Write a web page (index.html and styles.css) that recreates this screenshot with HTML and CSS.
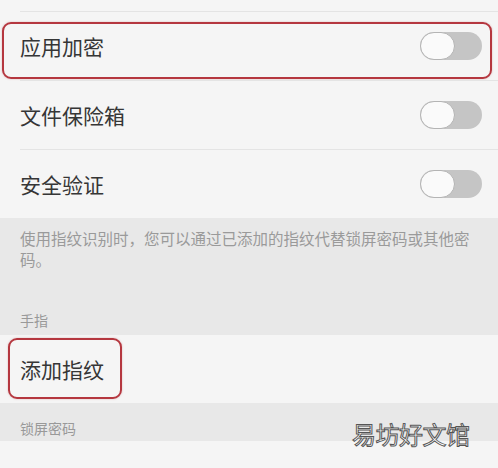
FILE: index.html
```html
<!DOCTYPE html>
<html lang="zh-CN">
<head>
  <meta charset="UTF-8" />
  <meta name="viewport" content="width=device-width, initial-scale=1.0"/>
  <title>指纹与密码</title>
  <link rel="stylesheet" href="styles.css">
</head>
<body>

  <div class="list">
    <div class="spacer"></div>
    <div class="row">
      <span class="row-title">应用加密</span>
      <span class="toggle"></span>
      <div class="mark mark-wide"></div>
    </div>
    <div class="row">
      <span class="row-title">文件保险箱</span>
      <span class="toggle"></span>
    </div>
    <div class="row">
      <span class="row-title">安全验证</span>
      <span class="toggle"></span>
    </div>
  </div>

  <div class="section">
    <p class="hint">使用指纹识别时，您可以通过已添加的指纹代替锁屏密码或其他密码。</p>
    <div class="section-label">手指</div>
  </div>

  <div class="item">
    <span class="row-title">添加指纹</span>
    <div class="mark mark-small"></div>
  </div>

  <div class="section section-short">
    <div class="section-label">锁屏密码</div>
  </div>

  <div class="item item-last"></div>

  <div class="watermark">易坊好文馆</div>

</body>
</html>
```

FILE: styles.css
```css
body {
  font-family: "Noto Sans CJK SC", "Noto Sans", sans-serif;
  background-color: #f5f5f5;
  color: #333;
  margin: 0;
  padding: 0;
  position: relative;
  height: 468px;
  overflow: hidden;
}
.spacer {
  height: 11px;
}
.row {
  position: relative;
  margin-left: 20px;
  padding-right: 16px;
  height: 69px;
  box-sizing: border-box;
  border-top: 1px solid #e4e4e4;
  display: flex;
  align-items: center;
  justify-content: space-between;
}
.row-title {
  font-size: 21px;
  color: #363636;
}
.toggle {
  position: relative;
  width: 62px;
  height: 28px;
  border-radius: 14px;
  background-color: #c5c5c5;
}
.toggle::before {
  content: "";
  position: absolute;
  left: 0;
  top: 0;
  width: 35px;
  height: 28px;
  box-sizing: border-box;
  border-radius: 14px;
  background-color: #fafafa;
  border: 1px solid #b4b4b4;
}
.section {
  background-color: #e8e8e8;
  padding: 10px 12px 5px 20px;
}
.hint {
  margin: 0 0 40px;
  font-size: 15.5px;
  line-height: 21px;
  color: #9a9a9a;
}
.section-label {
  font-size: 14px;
  line-height: 20px;
  color: #999;
}
.section-short {
  padding: 15px 20px 3px;
}
.item {
  position: relative;
  height: 68px;
  padding-left: 20px;
  display: flex;
  align-items: center;
}
.item-last {
  height: 30px;
}
.mark {
  position: absolute;
  box-sizing: border-box;
  border: 2px solid #b5373f;
  border-radius: 9px;
  box-shadow: 0 0 2px rgba(181, 55, 63, 0.35);
}
.mark-wide {
  left: -18px;
  top: 10px;
  width: 490px;
  height: 57px;
}
.mark-small {
  left: 8px;
  top: 3px;
  width: 114px;
  height: 61px;
}
.watermark {
  position: absolute;
  left: 352px;
  top: 419px;
  font-size: 24px;
  line-height: 30px;
  color: #fff;
  -webkit-text-stroke: 1px #555;
  letter-spacing: -0.5px;
}
```
